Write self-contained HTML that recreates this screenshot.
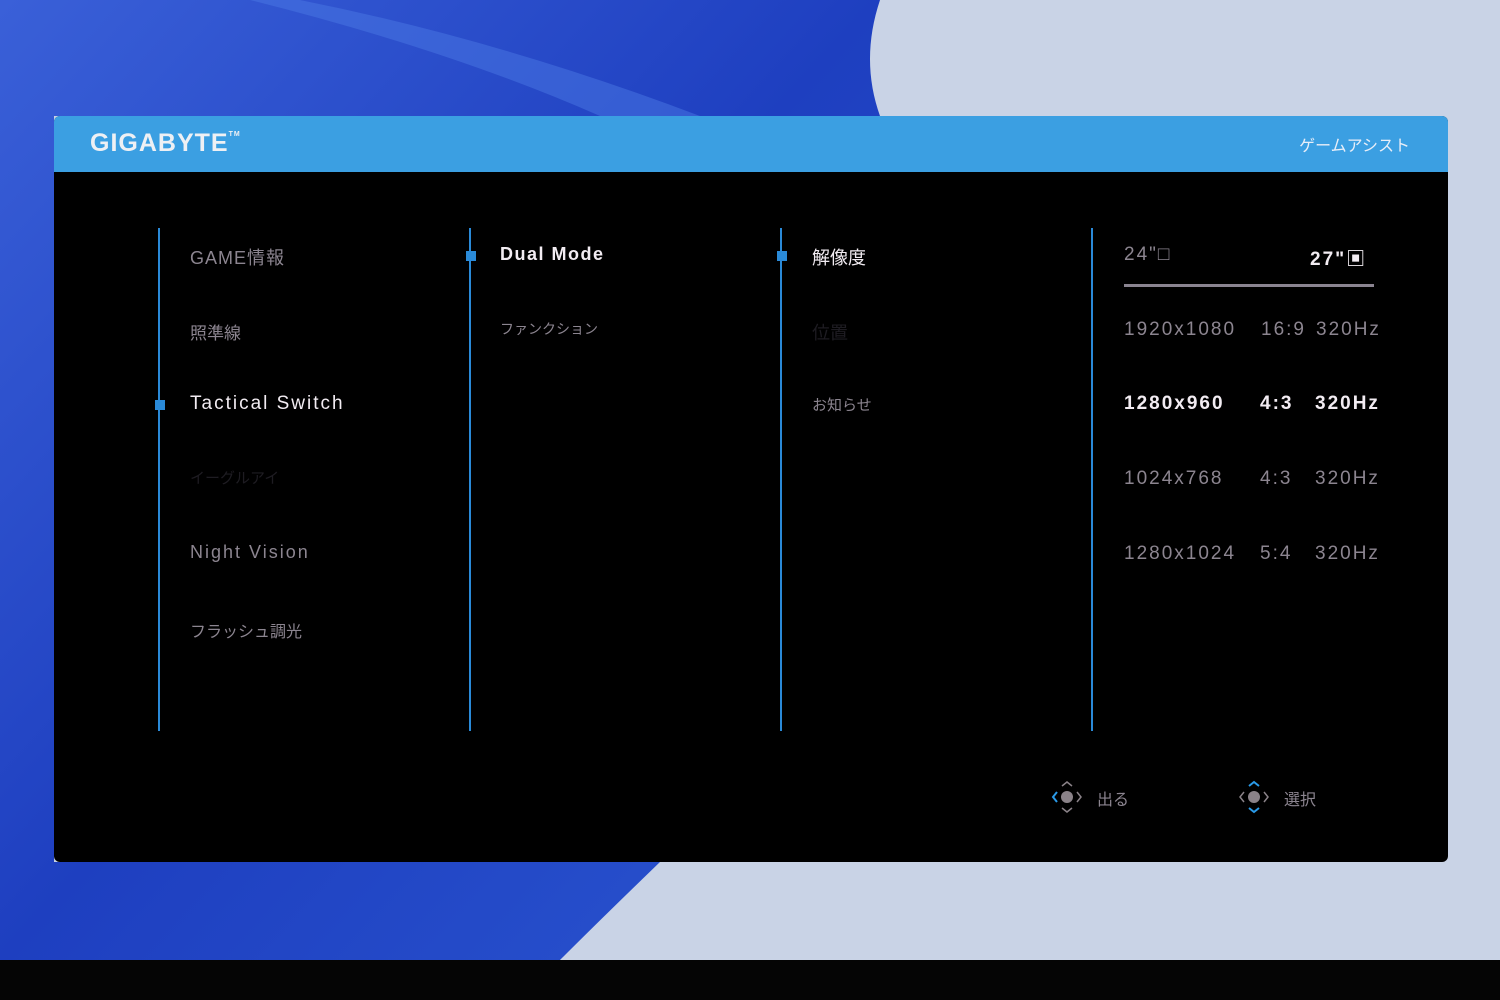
<!DOCTYPE html>
<html><head><meta charset="utf-8"><style>
body{margin:0;width:1500px;height:1000px;overflow:hidden;position:relative;background:#c9d3e6;font-family:"Liberation Sans","Noto Sans CJK JP",sans-serif}
.bg{position:absolute;left:0;top:0}
.panel{position:absolute;left:54px;top:116px;width:1394px;height:746px;background:#000;border-radius:6px;overflow:hidden}
.head{position:absolute;left:0;top:0;width:100%;height:56px;background:#3b9fe2}
.logo{position:absolute;left:36px;top:13px;color:#eef0f4;font-weight:bold;font-size:25px;letter-spacing:1px}
.logo sup{font-size:7px;vertical-align:top;position:relative;top:2px}
.ga{position:absolute;right:38px;top:16px;color:#e8eef8;font-size:16px}
.vl{position:absolute;width:2px;background:#2a8ad8;top:112px;height:503px}
.t{position:absolute;font-size:18px;color:#8c8590;white-space:nowrap}
.l{letter-spacing:2px}
.d{color:#1e1c22}
.sq{position:absolute;width:10px;height:10px;background:#2a8ad8}
.bar{position:absolute;left:1070px;top:168px;width:250px;height:3px;background:#8a8490}
.bot{position:absolute;left:0;top:960px;width:1500px;height:40px;background:#050505}
.r{position:absolute;font-size:19px;color:#8c8590;white-space:nowrap;letter-spacing:2px}
.t.w,.r.w{color:#f2ecf2}
</style></head><body>
<svg class="bg" width="1500" height="1000">
<defs><linearGradient id="g" x1="0" y1="0" x2="1" y2="1"><stop offset="0" stop-color="#3a60d8"/><stop offset="0.5" stop-color="#1e3fc0"/><stop offset="1" stop-color="#2a55d0"/></linearGradient></defs>
<path d="M0 0 L880 0 Q860 60 880 116 L54 116 L54 862 L660 862 Q600 920 560 960 L0 960 Z" fill="url(#g)"/>
<path d="M300 0 Q500 40 700 116 L600 116 Q450 50 250 0Z" fill="#4a78e4" opacity="0.5"/>
</svg>
<div class="panel">
<div class="head"><div class="logo">GIGABYTE<sup>TM</sup></div><div class="ga">ゲームアシスト</div></div>
<div class="vl" style="left:104px"></div>
<div class="vl" style="left:415px"></div>
<div class="vl" style="left:726px"></div>
<div class="vl" style="left:1037px"></div>
<div class="sq" style="left:101px;top:284px"></div>
<div class="sq" style="left:412px;top:135px"></div>
<div class="sq" style="left:723px;top:135px"></div>
<div class="t" style="left:136px;top:128px;letter-spacing:1px">GAME情報</div>
<div class="t" style="left:136px;top:203px;font-size:17px">照準線</div>
<div class="t w l" style="left:136px;top:277px;font-size:19px">Tactical Switch</div>
<div class="t d" style="left:136px;top:351px;font-size:15px">イーグルアイ</div>
<div class="t l" style="left:136px;top:426px">Night Vision</div>
<div class="t" style="left:136px;top:502px;font-size:16px">フラッシュ調光</div>
<div class="t w" style="left:446px;top:128px;font-weight:bold;letter-spacing:1.5px">Dual Mode</div>
<div class="t" style="left:446px;top:203px;font-size:14px">ファンクション</div>
<div class="t w" style="left:758px;top:128px">解像度</div>
<div class="t d" style="left:758px;top:203px">位置</div>
<div class="t" style="left:758px;top:278px;font-size:15px">お知らせ</div>
<div class="r" style="left:1070px;top:128px">24"□</div>
<div class="r w" style="left:1256px;top:128px;font-weight:bold">27"▣</div>
<div class="bar"></div>
<div class="r" style="left:1070px;top:203px">1920x1080</div><div class="r" style="left:1207px;top:203px">16:9</div><div class="r" style="left:1262px;top:203px">320Hz</div>
<div class="r w" style="left:1070px;top:277px;font-weight:bold">1280x960</div><div class="r w" style="left:1206px;top:277px;font-weight:bold">4:3</div><div class="r w" style="left:1261px;top:277px;font-weight:bold">320Hz</div>
<div class="r" style="left:1070px;top:352px">1024x768</div><div class="r" style="left:1206px;top:352px">4:3</div><div class="r" style="left:1261px;top:352px">320Hz</div>
<div class="r" style="left:1070px;top:427px">1280x1024</div><div class="r" style="left:1206px;top:427px">5:4</div><div class="r" style="left:1261px;top:427px">320Hz</div>
<svg style="position:absolute;left:996px;top:664px" width="34" height="34"><circle cx="17" cy="17" r="6" fill="#8a8288"/><path d="M7 12L3 17L7 22" stroke="#2a9ae8" stroke-width="2" fill="none"/><path d="M27 12L31 17L27 22M12 6L17 2L22 6M12 28L17 32L22 28" stroke="#8a8288" stroke-width="1.5" fill="none"/></svg>
<div class="t" style="left:1043px;top:670px;font-size:16px">出る</div>
<svg style="position:absolute;left:1183px;top:664px" width="34" height="34"><circle cx="17" cy="17" r="6" fill="#8a8288"/><path d="M7 12L3 17L7 22M27 12L31 17L27 22" stroke="#8a8288" stroke-width="1.5" fill="none"/><path d="M12 6L17 2L22 6M12 28L17 32L22 28" stroke="#2a9ae8" stroke-width="2" fill="none"/></svg>
<div class="t" style="left:1230px;top:670px;font-size:16px">選択</div>
</div>
<div class="bot"></div>
</body></html>
